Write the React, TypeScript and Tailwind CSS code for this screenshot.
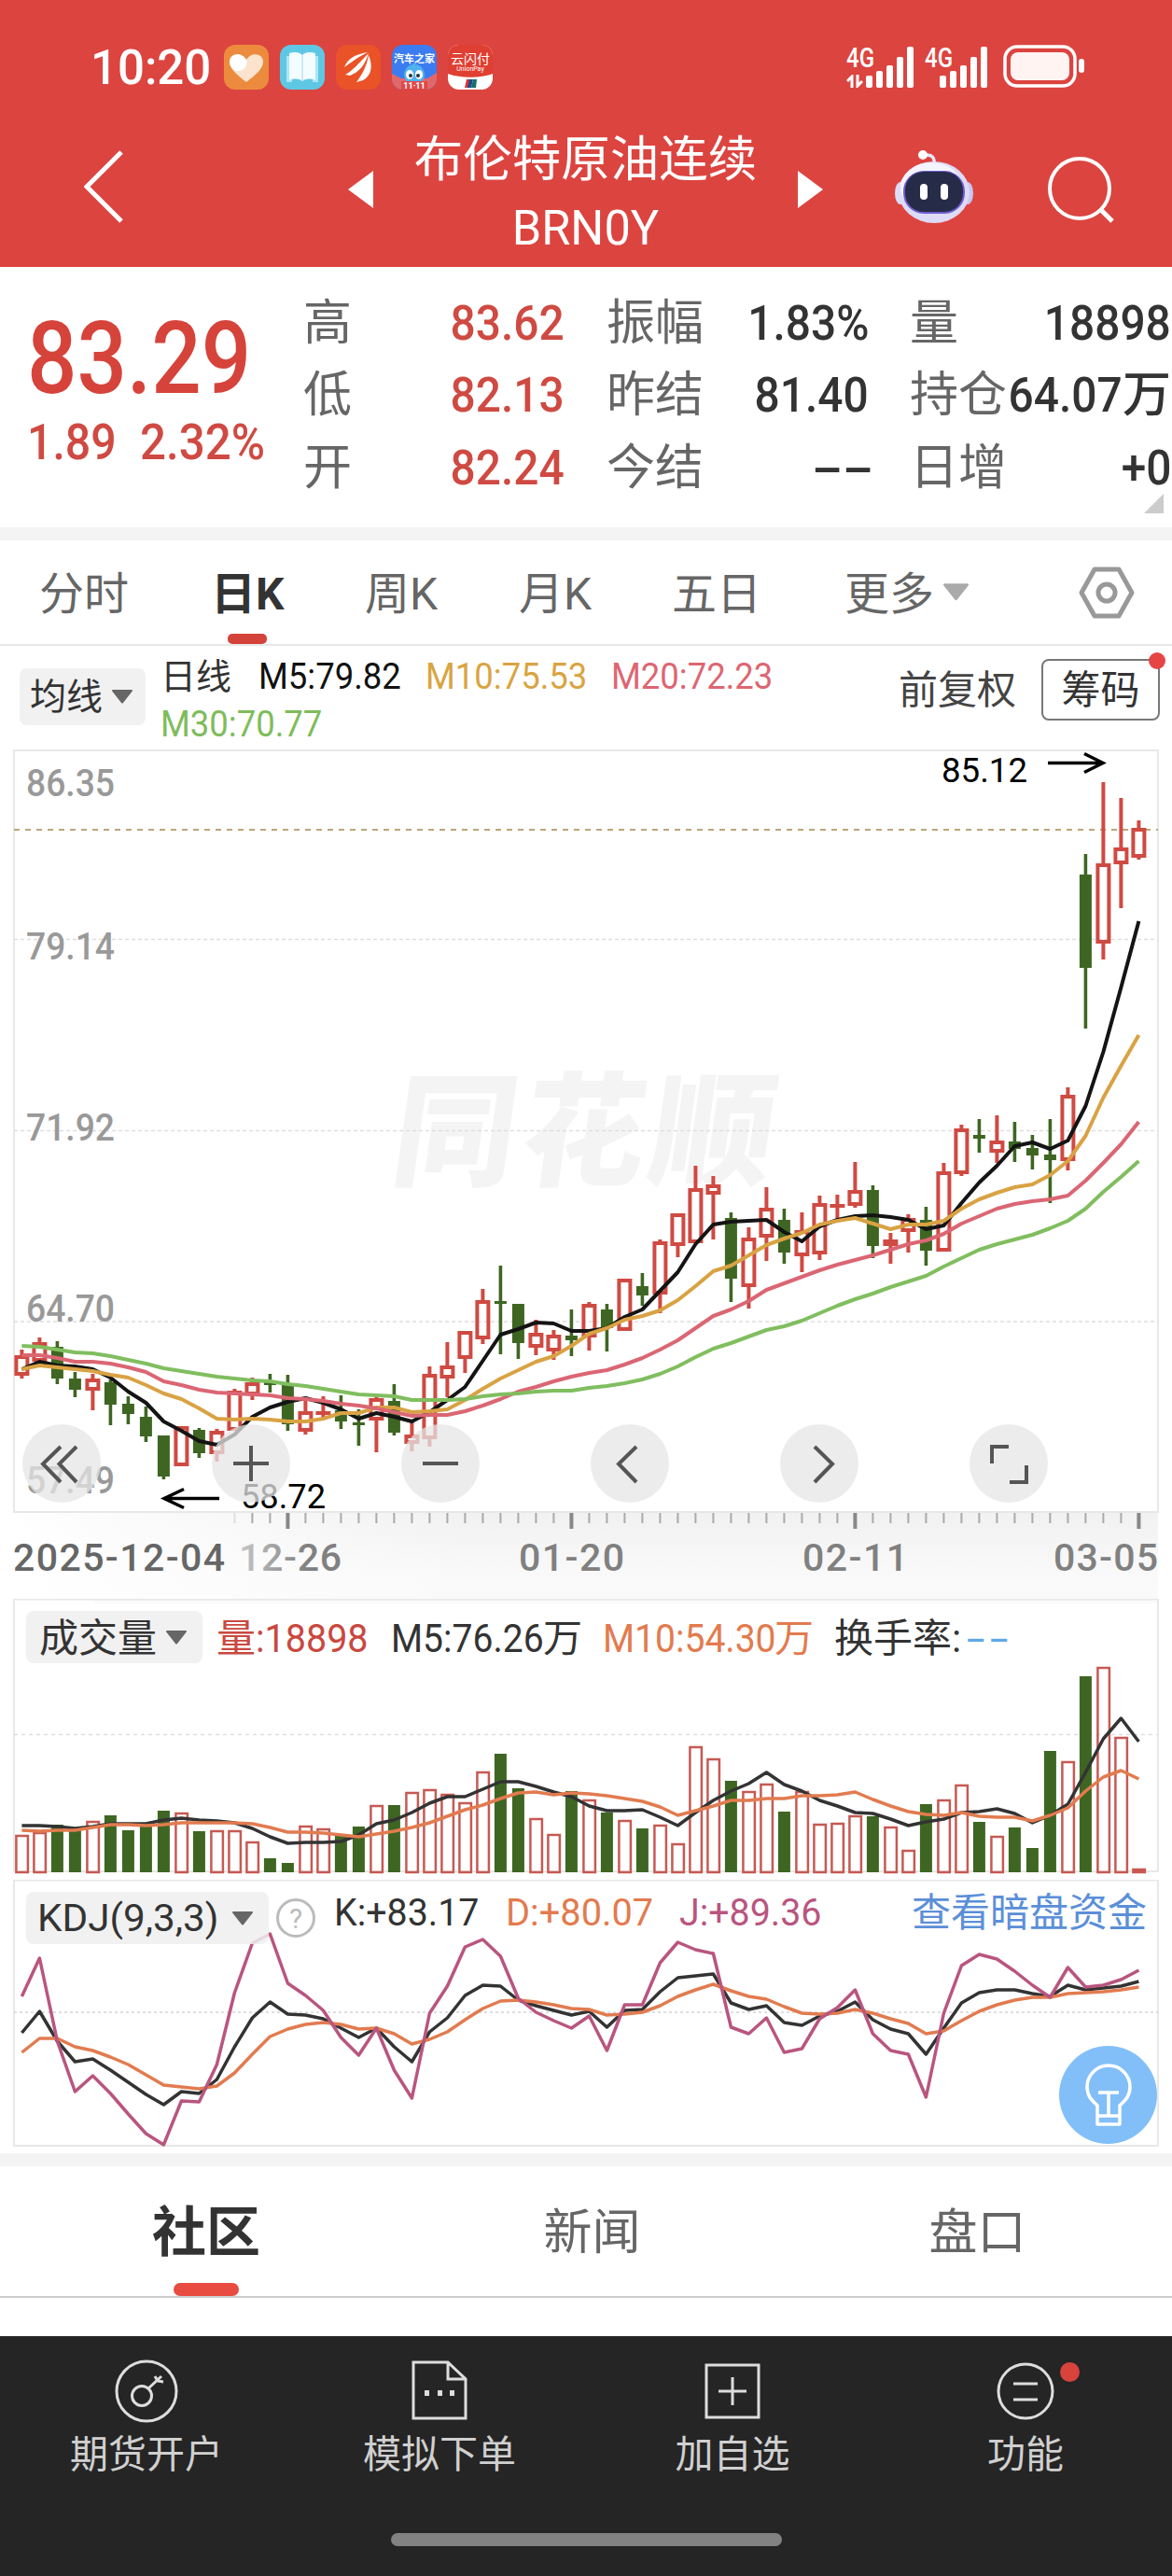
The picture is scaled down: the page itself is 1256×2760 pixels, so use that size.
import React from "react";

// x of the n-th trading day, shared by the three charts
const dayX = (i: number) => 23.4 + i * 19;

// [up?, high, body top, body bottom, low]
const candles: number[][] = [
  [1, 1446, 1452, 1474, 1477], [1, 1433, 1438, 1459, 1459], [0, 1437, 1443, 1477, 1483], [0, 1470, 1477, 1489, 1497],
  [1, 1472, 1477, 1490, 1511], [0, 1478, 1481, 1505, 1527], [0, 1496, 1504, 1515, 1526], [0, 1507, 1518, 1539, 1545],
  [0, 1538, 1538, 1582, 1585], [1, 1528, 1528, 1571, 1571], [0, 1530, 1532, 1557, 1562], [1, 1531, 1533, 1558, 1566],
  [1, 1488, 1490, 1533, 1533], [1, 1476, 1481, 1495, 1500], [0, 1472, 1479, 1484, 1492], [0, 1473, 1484, 1526, 1533],
  [1, 1498, 1512, 1534, 1537], [1, 1496, 1512, 1516, 1519], [0, 1495, 1511, 1523, 1531], [0, 1510, 1524, 1527, 1549],
  [1, 1496, 1498, 1522, 1556], [0, 1483, 1501, 1535, 1538], [1, 1522, 1537, 1547, 1555], [1, 1464, 1472, 1542, 1550],
  [1, 1438, 1463, 1477, 1497], [1, 1426, 1426, 1456, 1471], [1, 1381, 1393, 1435, 1440], [0, 1356, 1394, 1397, 1451],
  [0, 1397, 1397, 1439, 1456], [1, 1414, 1428, 1444, 1452], [1, 1425, 1430, 1448, 1457], [0, 1403, 1431, 1436, 1453],
  [1, 1395, 1397, 1433, 1447], [0, 1397, 1403, 1423, 1448], [1, 1370, 1370, 1426, 1426], [0, 1364, 1378, 1388, 1399],
  [1, 1328, 1330, 1387, 1407], [1, 1300, 1300, 1335, 1347], [1, 1249, 1273, 1332, 1332], [1, 1260, 1269, 1280, 1328],
  [0, 1299, 1305, 1370, 1395], [1, 1315, 1326, 1379, 1402], [1, 1272, 1294, 1326, 1351], [0, 1295, 1307, 1342, 1354],
  [1, 1299, 1318, 1346, 1363], [1, 1281, 1289, 1344, 1350], [1, 1280, 1290, 1294, 1307], [1, 1245, 1275, 1292, 1294],
  [0, 1270, 1275, 1335, 1348], [1, 1321, 1328, 1335, 1354], [1, 1301, 1305, 1320, 1342], [0, 1293, 1307, 1340, 1356],
  [1, 1246, 1255, 1341, 1341], [1, 1205, 1209, 1258, 1260], [0, 1199, 1216, 1220, 1235], [1, 1195, 1222, 1235, 1246],
  [0, 1202, 1223, 1231, 1245], [0, 1216, 1230, 1238, 1253], [0, 1199, 1237, 1243, 1289], [1, 1165, 1173, 1244, 1254],
  [0, 915, 937, 1037, 1102], [1, 838, 925, 1011, 1028], [1, 855, 908, 926, 973], [1, 879, 887, 919, 921],
];

const ma5 = [
  1467, 1459, 1463, 1464, 1467, 1476, 1491, 1503, 1523, 1533, 1544, 1548, 1537, 1518, 1508, 1502, 1498, 1503, 1510, 1520, 1514,
  1518, 1523, 1513, 1500, 1486, 1458, 1430, 1424, 1417, 1418, 1426, 1426, 1423, 1411, 1403, 1383, 1363, 1333, 1312, 1309, 1308,
  1307, 1320, 1330, 1314, 1307, 1303, 1302, 1304, 1307, 1317, 1313, 1289, 1267, 1249, 1228, 1224, 1231, 1222, 1185, 1127, 1058, 987,
];
const ma10 = [
  1467, 1463, 1465, 1467, 1469, 1473, 1476, 1484, 1493, 1499, 1509, 1520, 1521, 1520, 1521, 1523, 1523, 1520, 1514, 1514, 1508,
  1508, 1513, 1512, 1510, 1500, 1488, 1477, 1468, 1459, 1453, 1442, 1429, 1423, 1414, 1410, 1404, 1393, 1378, 1362, 1356, 1345,
  1334, 1327, 1321, 1312, 1308, 1305, 1311, 1317, 1312, 1312, 1308, 1295, 1285, 1278, 1272, 1269, 1259, 1244, 1217, 1176, 1142, 1109,
];
const ma20 = [
  1452, 1452, 1455, 1459, 1459, 1461, 1465, 1470, 1480, 1484, 1489, 1492, 1493, 1494, 1495, 1498, 1499, 1501, 1504, 1506, 1509,
  1513, 1517, 1516, 1516, 1512, 1506, 1499, 1491, 1486, 1480, 1475, 1471, 1468, 1462, 1455, 1446, 1436, 1423, 1410, 1403, 1394,
  1382, 1375, 1368, 1361, 1355, 1350, 1345, 1339, 1333, 1329, 1322, 1311, 1303, 1295, 1290, 1287, 1285, 1281, 1265, 1246, 1226, 1202,
];
const ma30 = [
  1442, 1443, 1446, 1449, 1450, 1453, 1457, 1461, 1466, 1469, 1472, 1475, 1477, 1479, 1480, 1483, 1485, 1488, 1491, 1494, 1495,
  1496, 1500, 1500, 1500, 1499, 1496, 1494, 1493, 1491, 1490, 1490, 1487, 1485, 1482, 1478, 1472, 1464, 1454, 1445, 1439, 1432,
  1425, 1421, 1415, 1407, 1399, 1392, 1386, 1379, 1373, 1367, 1357, 1348, 1339, 1333, 1328, 1323, 1316, 1308, 1295, 1277, 1261, 1244,
];

const volumes = [
  1966, 1963, 1955, 1960, 1951, 1945, 1961, 1955, 1940, 1942, 1962, 1961, 1961, 1973, 1991, 1996, 1956, 1959, 1967, 1957, 1934,
  1934, 1920, 1917, 1922, 1931, 1898, 1879, 1916, 1948, 1965, 1919, 1928, 1942, 1950, 1959, 1955, 1975, 1871, 1884, 1908, 1919,
  1911, 1941, 1919, 1954, 1953, 1945, 1946, 1957, 1982, 1933, 1928, 1912, 1952, 1967, 1958, 1980, 1876, 1887, 1796, 1786, 1861, 2002,
];
const vol5 = [
  1956, 1956, 1957, 1959, 1957, 1954, 1954, 1954, 1950, 1948, 1950, 1951, 1953, 1959, 1968, 1975, 1974, 1974, 1973, 1966, 1954,
  1950, 1942, 1932, 1925, 1925, 1917, 1909, 1909, 1914, 1920, 1925, 1935, 1940, 1940, 1939, 1947, 1956, 1942, 1929, 1919, 1911,
  1899, 1912, 1919, 1929, 1935, 1942, 1943, 1949, 1956, 1952, 1949, 1942, 1941, 1938, 1943, 1953, 1945, 1933, 1899, 1863, 1841, 1866,
];
const vol10 = [
  1961, 1962, 1961, 1961, 1958, 1955, 1955, 1956, 1955, 1953, 1953, 1953, 1953, 1954, 1958, 1963, 1963, 1964, 1966, 1968, 1965,
  1962, 1958, 1953, 1946, 1939, 1934, 1927, 1921, 1920, 1923, 1921, 1922, 1924, 1927, 1930, 1936, 1945, 1940, 1935, 1929, 1929,
  1927, 1927, 1924, 1924, 1923, 1920, 1928, 1935, 1941, 1944, 1945, 1942, 1946, 1947, 1947, 1951, 1945, 1937, 1919, 1904, 1897, 1906,
];

const kLine = [
  2178, 2155, 2187, 2209, 2206, 2218, 2231, 2244, 2255, 2241, 2243, 2228, 2193, 2162, 2145, 2158, 2159, 2163, 2173, 2183, 2173,
  2193, 2209, 2177, 2162, 2138, 2127, 2128, 2143, 2149, 2154, 2159, 2155, 2172, 2154, 2153, 2134, 2119, 2117, 2115, 2146, 2153,
  2149, 2167, 2170, 2160, 2155, 2145, 2164, 2174, 2179, 2201, 2173, 2146, 2135, 2132, 2132, 2136, 2139, 2127, 2132, 2130, 2128, 2123,
];
const dLine = [
  2199, 2184, 2184, 2193, 2197, 2204, 2212, 2223, 2234, 2236, 2238, 2235, 2221, 2201, 2182, 2174, 2169, 2167, 2169, 2174, 2173,
  2179, 2190, 2185, 2177, 2164, 2152, 2144, 2143, 2145, 2148, 2152, 2153, 2159, 2158, 2156, 2149, 2139, 2132, 2126, 2133, 2139,
  2142, 2150, 2157, 2158, 2157, 2153, 2157, 2163, 2168, 2179, 2176, 2165, 2155, 2148, 2143, 2140, 2140, 2136, 2135, 2134, 2132, 2129,
];
const jLine = [
  2139, 2098, 2187, 2241, 2224, 2243, 2265, 2286, 2298, 2251, 2252, 2212, 2135, 2082, 2072, 2125, 2138, 2154, 2183, 2202, 2173,
  2218, 2248, 2157, 2128, 2086, 2078, 2096, 2141, 2156, 2165, 2173, 2160, 2197, 2148, 2148, 2103, 2081, 2089, 2093, 2172, 2179,
  2162, 2199, 2195, 2163, 2151, 2132, 2179, 2197, 2201, 2247, 2157, 2106, 2094, 2099, 2112, 2127, 2140, 2108, 2129, 2127, 2121, 2111,
];

const UP = "#cf4a42";
const DOWN = "#3e6622";

const Curve = ({ ys, color, width = 4 }: { ys: number[]; color: string; width?: number }) => (
  <polyline
    points={ys.map((y, i) => `${dayX(i)},${y}`).join(" ")}
    fill="none"
    stroke={color}
    strokeWidth={width}
    strokeLinejoin="round"
  />
);

const ChartText = ({
  x, y, w, size = 41, color = "#999", weight = 500, spread, children,
}: {
  x: number; y: number; w: number; size?: number; color?: string; weight?: number; spread?: boolean; children: string;
}) => (
  <text
    x={x}
    y={y}
    fontSize={size}
    fontWeight={weight}
    fill={color}
    textLength={w}
    lengthAdjust={spread ? "spacing" : "spacingAndGlyphs"}
  >
    {children}
  </text>
);

const Caret = ({ className }: { className: string }) => (
  <svg viewBox="0 0 22 15" className={className} fill="currentColor">
    <path d="M1 0h20a1 1 0 0 1 .8 1.600L12 14a1.300 1.300 0 0 1-2 0L.2 1.600A1 1 0 0 1 1 0z" />
  </svg>
);

const Signal = () => (
  <svg viewBox="0 0 51 44" className="w-[51px] h-[44px]" fill="#fff">
    <rect x="0" y="31" width="7" height="13" rx="2" />
    <rect x="11" y="26" width="7" height="18" rx="2" />
    <rect x="22" y="20" width="7" height="24" rx="2" />
    <rect x="33" y="11" width="7" height="33" rx="2" />
    <rect x="44" y="0" width="7" height="44" rx="2" />
  </svg>
);

const StatusBar = () => (
  <div className="h-[143px] flex items-center text-white">
    <div className="w-[240px] pl-[97px] pt-[2px] shrink-0">
      <span className="inline-block origin-left scale-x-[0.98] text-[52px] leading-none font-medium">10:20</span>
    </div>
    <div className="flex gap-3">
      <svg viewBox="0 0 48 48" className="size-12">
        <rect width="48" height="48" rx="12" fill="#ec8b3d" />
        <path d="M24 40C15 33 6 26 6 18c0-9 13-11 18-2 5-9 18-7 18 2 0 8-9 15-18 22z" fill="#fbe3cd" />
        <path d="M24 16C19 7 6 9 6 18c0 5 3 8 7 10 7 1 13-4 11-12z" fill="#fff" />
      </svg>
      <svg viewBox="0 0 48 48" className="size-12">
        <rect width="48" height="48" rx="12" fill="#5ec8e4" />
        <path d="M7 12h6v28H7zM35 12h6v28h-6z" fill="#a9e6f5" />
        <path d="M10 9c6-2 11-1 14 2v28c-4-3-9-3-14-1zM38 9c-6-2-11-1-14 2v28c4-3 9-3 14-1z" fill="#f3fcff" />
        <path d="M24 11v28" stroke="#bfe6f0" strokeWidth="1.5" />
      </svg>
      <svg viewBox="0 0 48 48" className="size-12">
        <rect width="48" height="48" rx="12" fill="#ea5327" />
        <path d="M9 24C13 14 22 10 34 8 22 14 18 18 9 24zM10 32c8-4 14-12 25-23-4 13-10 20-20 24zM22 40c6-8 11-17 13-29 5 12 3 22-6 27z" fill="#fff" />
      </svg>
      <svg viewBox="0 0 48 48" className="size-12 rounded-[12px]">
        <rect width="48" height="48" fill="#3b7cf0" />
        <path d="M0 31l10 5 28 0 10-6v18H0z" fill="#e0686a" />
        <circle cx="24" cy="32" r="11" fill="#4fb2ee" />
        <path d="M24 19l4 5h-8z" fill="#4fb2ee" />
        <ellipse cx="19" cy="32" rx="4" ry="5" fill="#fff" />
        <ellipse cx="29" cy="32" rx="4" ry="5" fill="#fff" />
        <circle cx="20" cy="33" r="2" fill="#234" />
        <circle cx="28" cy="33" r="2" fill="#234" />
        <rect x="10" y="39" width="28" height="9" fill="#e04848" />
        <text x="24" y="19" fontSize="11" fontWeight="700" textAnchor="middle" fill="#fff">汽车之家</text>
        <text x="24" y="47" fontSize="9" fontWeight="700" textAnchor="middle" fill="#fff">11·11</text>
      </svg>
      <svg viewBox="0 0 48 48" className="size-12 rounded-[12px]">
        <rect width="48" height="48" fill="#fff" />
        <path d="M0 0h48v31c-14 5-34 5-48 0z" fill="#df3f32" />
        <text x="24" y="20" fontSize="14" textAnchor="middle" fill="#fff">云闪付</text>
        <text x="24" y="28" fontSize="7" textAnchor="middle" fill="#fff">UnionPay</text>
        <path d="M20 37h4l-2 9h-4z" fill="#d33" />
        <path d="M23 37h4l-2 9h-4z" fill="#1b4b8a" />
        <path d="M27 37h4l-1 9h-5z" fill="#12706c" />
      </svg>
    </div>
    <div className="ml-auto mr-[93px] flex items-end h-[44px]">
      <div className="w-[21px] h-[44px] flex flex-col justify-between">
        <span className="inline-block origin-left scale-x-[0.8] text-[30px] leading-[24px] font-medium">4G</span>
        <svg viewBox="0 0 18 14" className="w-[18px] h-[14px]" fill="none" stroke="#fff" strokeWidth="3">
          <path d="M6 14V2L1 7M12 0v12l5-5" />
        </svg>
      </div>
      <Signal />
      <div className="ml-3 w-[16px] h-[44px]">
        <span className="inline-block origin-left scale-x-[0.8] text-[30px] leading-[24px] font-medium">4G</span>
      </div>
      <Signal />
      <svg viewBox="0 0 88 46" className="ml-[17px] w-[88px] h-[46px]">
        <rect x="2" y="2" width="75" height="42" rx="13" fill="none" stroke="#fff" strokeWidth="3.5" />
        <rect x="8" y="8" width="63" height="30" rx="8" fill="#fff4f2" />
        <rect x="81" y="15" width="6" height="15" rx="3" fill="#fff" />
      </svg>
    </div>
  </div>
);

const Robot = () => (
  <svg viewBox="0 0 84 78" className="w-[84px] h-[78px]">
    <path d="M42 16c1-8-2-11-8-11" fill="none" stroke="#e8e6fa" strokeWidth="3.5" />
    <circle cx="30" cy="5" r="5" fill="#fff" />
    <ellipse cx="6" cy="46" rx="6" ry="12" fill="#dcdcf6" />
    <ellipse cx="78" cy="46" rx="6" ry="12" fill="#c9c6f2" />
    <ellipse cx="42" cy="45" rx="38" ry="33" fill="#dddbf6" />
    <ellipse cx="39" cy="40" rx="33" ry="27" fill="#f4f4ff" />
    <rect x="9" y="22" width="66" height="46" rx="22" fill="#6f5ccf" />
    <rect x="11" y="23" width="62" height="43" rx="20" fill="#262c48" />
    <rect x="27" y="36" width="8" height="17" rx="4" fill="#fff" />
    <rect x="49" y="36" width="8" height="17" rx="4" fill="#fff" />
  </svg>
);

const TitleBar = () => (
  <div className="h-[143px] flex text-white">
    <svg viewBox="0 0 42 78" className="ml-[90px] mt-[18px] w-[42px] h-[78px]" fill="none" stroke="#fff" strokeWidth="5">
      <path d="M40 2L3 39l37 37" />
    </svg>
    <svg viewBox="0 0 27 40" className="ml-[241px] mt-[40px] w-[27px] h-[40px]" fill="#fff">
      <path d="M27 0v40L0 20z" />
    </svg>
    <div className="w-[455px] flex flex-col items-center">
      <div className="h-[58px] mt-[-1px] leading-[58px] text-[52.5px]">布伦特原油连续</div>
      <div className="mt-[14px] leading-[62px] text-[51px]">
        <span className="inline-block scale-x-[0.99]">BRN0Y</span>
      </div>
    </div>
    <svg viewBox="0 0 27 40" className="mt-[40px] w-[27px] h-[40px]" fill="#fff">
      <path d="M0 0v40l27-20z" />
    </svg>
    <div className="ml-[77px] mt-[18px]">
      <Robot />
    </div>
    <svg viewBox="0 0 72 72" className="ml-[79px] mt-[24px] w-[72px] h-[72px]" fill="none" stroke="#fff" strokeWidth="4">
      <circle cx="35" cy="35" r="32" />
      <path d="M58 58l12 12" strokeWidth="5" />
    </svg>
  </div>
);

const Quote = ({ label, value, red }: { label: string; value: React.ReactNode; red?: boolean }) => (
  <div className="h-[77.5px] flex items-center justify-between text-[52px] leading-none">
    <span className="text-[#666] whitespace-nowrap">{label}</span>
    <span className={`font-medium whitespace-nowrap ${red ? "text-[#cf4a42]" : "text-[#333]"}`}>{value}</span>
  </div>
);

const Num = ({ children }: { children: React.ReactNode }) => (
  <span className="inline-block origin-right scale-x-[0.92]">{children}</span>
);

const Dashes = () => (
  <span className="inline-flex gap-[10px]">
    <span className="w-[23px] flex justify-center"><span className="inline-block scale-x-[1.9]">-</span></span>
    <span className="w-[23px] flex justify-center"><span className="inline-block scale-x-[1.9]">-</span></span>
  </span>
);

const QuotePanel = () => (
  <div className="relative h-[279px] flex bg-white">
    <div className="w-[325px] pl-[29px] pt-[45px] text-[#d6433b]">
      <div className="h-[108px] leading-[108px] text-[107px] font-medium">
        <span className="inline-block origin-left scale-x-[0.88]">83.29</span>
      </div>
      <div className="mt-[5px] flex h-[60px] leading-[60px] text-[53px] font-medium text-[#cf4a42]">
        <div className="w-[121px]"><span className="inline-block origin-left scale-x-[0.91]">1.89</span></div>
        <div><span className="inline-block origin-left scale-x-[0.93]">2.32%</span></div>
      </div>
    </div>
    <div className="pt-[22px] w-[280px]">
      <Quote label="高" red value={<Num>83.62</Num>} />
      <Quote label="低" red value={<Num>82.13</Num>} />
      <Quote label="开" red value={<Num>82.24</Num>} />
    </div>
    <div className="ml-[45px] pt-[22px] w-[281px]">
      <Quote label="振幅" value={<Num>1.83%</Num>} />
      <Quote label="昨结" value={<Num>81.40</Num>} />
      <Quote label="今结" value={<Dashes />} />
    </div>
    <div className="ml-[44px] pt-[22px] w-[280px]">
      <Quote label="量" value={<Num>18898</Num>} />
      <Quote label="持仓" value={<><span className="-ml-4"><Num>64.07</Num></span>万</>} />
      <Quote label="日增" value={<Num>+0</Num>} />
    </div>
    <svg viewBox="0 0 21 21" className="absolute right-[9px] bottom-[15px] size-[21px]" fill="#ccc">
      <path d="M21 0v21H0z" />
    </svg>
  </div>
);

const PeriodTabs = () => (
  <div className="relative h-[113px] flex items-center border-b-2 border-[#e8e8e8] text-[48px] leading-none text-[#666] whitespace-nowrap">
    <span className="w-[185px] pl-[42px] mt-[4px]">分时</span>
    <span className="w-[163px] pl-[41px] mt-[4px] font-bold text-[#333]">日K</span>
    <span className="w-[164px] pl-[43px] mt-[4px]">周K</span>
    <span className="w-[165px] pl-[44px] mt-[4px]">月K</span>
    <span className="w-[185px] pl-[43px] mt-[4px]">五日</span>
    <span className="pl-[43px] mt-[4px]">更多</span>
    <Caret className="ml-[10px] w-[27px] h-[21px] text-[#aaa]" />
    <svg viewBox="0 0 60 56" className="ml-[118px] w-[60px] h-[56px]" fill="none" stroke="#999" strokeWidth="5">
      <path d="M17 3h26l14 25-14 25H17L3 28z" strokeLinejoin="round" />
      <circle cx="30" cy="28" r="9" />
    </svg>
    <div className="absolute left-[244px] bottom-0 w-[42px] h-[11px] rounded-[5px] bg-[#d4433a]" />
  </div>
);

const MaLegend = () => (
  <div className="h-[111px] flex text-[38px]">
    <div className="ml-[21px] mt-[24px] w-[135px] h-[61px] rounded-lg bg-[#f1f1f1] flex items-center pl-[11px] text-[#333] text-[39px] leading-none">
      <span className="mt-[2px]">均线</span>
      <Caret className="ml-[10px] w-[22px] h-[15px] text-[#666]" />
    </div>
    <div className="ml-[16px] mt-[9px] w-[700px] flex flex-wrap leading-[48px] whitespace-nowrap">
      <span className="w-[105px] text-[#333]">日线</span>
      <span className="w-[179px] text-[#111]"><span className="inline-block origin-left scale-x-[0.96]">M5:79.82</span></span>
      <span className="w-[199px] text-[#d9a441]"><span className="inline-block origin-left scale-x-[0.96]">M10:75.53</span></span>
      <span className="w-[199px] text-[#dd6672]"><span className="inline-block origin-left scale-x-[0.96]">M20:72.23</span></span>
      <span className="w-[199px] text-[#7fbc5b]"><span className="inline-block origin-left scale-x-[0.96]">M30:70.77</span></span>
    </div>
    <div className="ml-auto mt-[15px] leading-[65px] text-[42px] text-[#444]">前复权</div>
    <div className="relative ml-[27px] mr-[13px] mt-[14px] w-[127px] h-[66px] border-2 border-[#777] rounded-lg text-center text-[42px] leading-[64px] text-[#333]">
      筹码
      <span className="absolute -right-[8px] -top-[9px] size-[18px] rounded-full bg-[#e64545]" />
    </div>
  </div>
);

const toolIcons = [
  "M41 24L22 42.500l19 19.500M58 24L39.500 42.500l18.500 19.500",
  "M42 23v38M23 42h38",
  "M23 42h38",
  "M49 24L30 42.500l19 19.500",
  "M37 24l19 18.500-19 19.500",
  "M42 24H24v18M61 44v18H43",
];

const PriceChart = () => (
  <div className="relative h-[910px]">
    <svg viewBox="0 803 1256 910" className="block w-[1256px] h-[910px]">
      <defs>
        <linearGradient id="axisBg" x1="0" x2="0" y1="0" y2="1">
          <stop offset="0" stopColor="#f1f1f1" />
          <stop offset="0.7" stopColor="#f9f9f9" />
          <stop offset="1" stopColor="#fafafa" />
        </linearGradient>
        <linearGradient id="fadeLeft">
          <stop offset="0" stopColor="#fff" />
          <stop offset="0.25" stopColor="#fff" stopOpacity="0.7" />
          <stop offset="1" stopColor="#fff" stopOpacity="0" />
        </linearGradient>
        <linearGradient id="dateFade" gradientUnits="userSpaceOnUse" x1="250" x2="330" y1="0" y2="0">
          <stop offset="0" stopColor="#ccc" />
          <stop offset="1" stopColor="#808080" />
        </linearGradient>
      </defs>
      <rect x="15" y="1620" width="1226" height="93" fill="url(#axisBg)" />
      <rect x="15" y="1620" width="500" height="93" fill="url(#fadeLeft)" />

      <text transform="translate(416 1260) skewX(-8)" fontSize="132" fontWeight="900" fill="#f4f4f4" textLength="408">同花顺</text>

      <rect x="15" y="804" width="1226" height="816" fill="none" stroke="#e8e8e8" strokeWidth="2" />
      {[1006.5, 1211.5, 1416].map((y) => (
        <path key={y} d={`M15 ${y}H1241`} stroke="#dedede" strokeWidth="1.5" strokeDasharray="4 3" />
      ))}
      <path d="M15 889H1241" stroke="#bca57a" strokeWidth="2" strokeDasharray="6 6" />

      <ChartText x={28} y={853} w={95}>86.35</ChartText>
      <ChartText x={28} y={1028} w={95}>79.14</ChartText>
      <ChartText x={28} y={1222} w={95}>71.92</ChartText>
      <ChartText x={28} y={1416} w={95}>64.70</ChartText>
      <ChartText x={28} y={1600} w={95}>57.49</ChartText>

      {candles.map(([up, high, top, bottom, low], i) => {
        const x = dayX(i);
        return up ? (
          <g key={i} stroke={UP} strokeWidth="4" fill="none">
            <path d={`M${x} ${high}V${top}M${x} ${bottom}V${low}`} />
            {bottom - top > 8 ? (
              <rect x={x - 6} y={top + 2} width="12" height={bottom - top - 4} />
            ) : (
              <rect x={x - 8} y={top} width="16" height={bottom - top} fill={UP} stroke="none" />
            )}
          </g>
        ) : (
          <g key={i} fill={DOWN}>
            <rect x={x - 1.8} y={high} width="3.6" height={low - high} />
            <rect x={x - 6.5} y={top} width="13" height={bottom - top} />
          </g>
        );
      })}
      <Curve ys={ma5} color="#141414" />
      <Curve ys={ma10} color="#d9a243" />
      <Curve ys={ma20} color="#db6673" />
      <Curve ys={ma30} color="#80be5f" />

      <ChartText x={1009} y={838} w={92} size={36} color="#000" weight={400}>85.12</ChartText>
      <path d="M1123 817.500H1181M1162 807.500L1182 817.500l-20 10" fill="none" stroke="#000" strokeWidth="3.5" />
      <ChartText x={258} y={1616} w={91} size={36} color="#000" weight={400}>58.72</ChartText>
      <path d="M235 1605.500H177M197 1595.500L176 1605.500l21 10" fill="none" stroke="#000" strokeWidth="3.5" />

      {candles.map((_, i) =>
        i < 12 ? null : (i + 1) % 16 === 0 ? (
          <rect key={i} x={dayX(i) - 2} y="1621" width="4" height="17" fill="#888" />
        ) : (
          <rect key={i} x={dayX(i) - 1} y="1621" width="2" height="11" fill={i === 12 ? "#ddd" : "#aaa"} />
        )
      )}
      <ChartText x={14} y={1683} w={227} color="#666" spread>2025-12-04</ChartText>
      <ChartText x={256} y={1683} w={110} color="url(#dateFade)" spread>12-26</ChartText>
      <ChartText x={556} y={1683} w={113} color="#808080" spread>01-20</ChartText>
      <ChartText x={860} y={1683} w={113} color="#808080" spread>02-11</ChartText>
      <ChartText x={1129} y={1683} w={112} color="#808080" spread>03-05</ChartText>
    </svg>
    <div className="absolute left-[24px] top-[723px] flex gap-[119px]">
      {toolIcons.map((d) => (
        <button key={d} className="size-[84px] rounded-full bg-[#e5e5e5]/75">
          <svg viewBox="0 0 84 84" className="size-[84px]" fill="none" stroke="#555" strokeWidth="4">
            <path d={d} />
          </svg>
        </button>
      ))}
    </div>
  </div>
);

const VolumeChart = () => (
  <div className="relative h-[301px]">
    <svg viewBox="0 1713 1256 301" className="block w-[1256px] h-[301px]">
      <rect x="100" y="1713" width="1141" height="5" fill="#fafafa" />
      <path d="M15 2005V1713.500H1241V2005z" fill="none" stroke="#e8e8e8" strokeWidth="2" />
      <path d="M15 1858.500H1241" stroke="#dedede" strokeWidth="1.5" strokeDasharray="4 4" />
      {volumes.map((y, i) =>
        candles[i][0] ? (
          <rect key={i} x={dayX(i) - 6} y={y + 1} width="12.5" height={Math.max(2005 - y, 2)} fill={y > 2000 ? UP : "none"} stroke="#c65a53" strokeWidth="2.5" />
        ) : (
          <rect key={i} x={dayX(i) - 6.5} y={y} width="13" height={2006 - y} fill={DOWN} />
        )
      )}
      <Curve ys={vol5} color="#333" width={3.5} />
      <Curve ys={vol10} color="#e27b4f" width={3.5} />
    </svg>
    <div className="absolute left-[28px] top-[13px] h-[56px] flex items-center text-[42px] leading-none whitespace-nowrap">
      <div className="w-[189px] h-[56px] rounded-lg bg-[#f1f1f1] flex items-center pl-[14px] text-[#333]">
        <span className="mt-[3px]">成交量</span>
        <Caret className="ml-[10px] w-[22px] h-[15px] text-[#666]" />
      </div>
      <span className="mt-[3px] ml-[15px] w-[187px] text-[#c9483f]">
        量<span className="inline-block origin-left scale-x-[0.94]">:18898</span>
      </span>
      <span className="mt-[3px] w-[227px] flex text-[#333]">
        <span className="w-[163px]"><span className="inline-block origin-left scale-x-[0.93]">M5:76.26</span></span>万
      </span>
      <span className="mt-[3px] w-[248px] flex text-[#e27b4f]">
        <span className="w-[184px]"><span className="inline-block origin-left scale-x-[0.93]">M10:54.30</span></span>万
      </span>
      <span className="mt-[3px] text-[#333]">换手率:</span>
      <span className="mt-[3px] ml-[6px] flex gap-[6px] text-[#5fa8e8]">
        <span className="w-[19px] flex justify-center"><span className="inline-block scale-x-[1.7]">-</span></span>
        <span className="w-[19px] flex justify-center"><span className="inline-block scale-x-[1.7]">-</span></span>
      </span>
    </div>
  </div>
);

const KdjChart = () => (
  <div className="relative h-[293px]">
    <svg viewBox="0 2014 1256 293" className="block w-[1256px] h-[293px]">
      <rect x="15" y="2014.5" width="1226" height="284.5" fill="none" stroke="#e8e8e8" strokeWidth="2" />
      <path d="M15 2156H1241" stroke="#d4d4d4" strokeWidth="1.5" strokeDasharray="3 3" />
      <Curve ys={kLine} color="#333" width={3.5} />
      <Curve ys={dLine} color="#e27b4f" width={3.5} />
      <Curve ys={jLine} color="#b9557f" width={3.5} />
    </svg>
    <div className="absolute left-[28px] right-[27px] top-[13px] flex text-[41px] leading-[45px] whitespace-nowrap">
      <div className="w-[260px] h-[56px] rounded-lg bg-[#eee]/85 flex items-center pl-[12px] pt-px text-[#333]">
        <span className="w-[199px]"><span className="inline-block origin-left scale-x-[1.03]">KDJ(9,3,3)</span></span>
        <Caret className="ml-[10px] w-[22px] h-[15px] text-[#666]" />
      </div>
      <div className="ml-[8px] mt-[7px] size-[42px] rounded-full border-3 border-[#bbb] text-center text-[30px] leading-[37px] text-[#bbb]">?</div>
      <span className="ml-[20px] w-[184px] text-[#333]"><span className="inline-block origin-left scale-x-[0.96]">K:+83.17</span></span>
      <span className="w-[186px] text-[#e27b4f]"><span className="inline-block origin-left scale-x-[0.97]">D:+80.07</span></span>
      <span className="text-[#b9557f]"><span className="inline-block origin-left scale-x-[0.96]">J:+89.36</span></span>
      <span className="ml-auto text-[42px] text-[#5b8fd8]">查看暗盘资金</span>
    </div>
    <svg viewBox="0 0 105 105" className="absolute left-[1135px] top-[178px] size-[105px]">
      <circle cx="52.5" cy="52.5" r="52.5" fill="#82bff8" />
      <g fill="none" stroke="#fff" strokeWidth="3.5" strokeLinejoin="round">
        <path d="M41 76V64c-6-6-11-10-11-20a23 23 0 0 1 46 0c0 10-5 14-11 20v20H41zM41 75h24M42 50h22M53 50v25" />
      </g>
    </svg>
  </div>
);

const BottomTabs = () => (
  <div className="relative h-[141px] flex border-b-2 border-[#ccc] text-[52px] leading-[143px] text-[#666]">
    <span className="w-[442px] text-center text-[58px] font-bold text-[#333]">社区</span>
    <span className="w-[385px] text-center">新闻</span>
    <span className="w-[429px] pl-[12px] text-center">盘口</span>
    <div className="absolute left-[186px] bottom-0 w-[70px] h-[14px] rounded-[7px] bg-[#e84b3f]" />
  </div>
);

const NavItem = ({ label, children }: { label: string; children: React.ReactNode }) => (
  <div className="w-[314px] flex flex-col items-center">
    <svg viewBox="0 0 70 70" className="size-[70px]" fill="none" stroke="#ddd" strokeWidth="3">
      {children}
    </svg>
    <span className="mt-[3px] text-[41px] leading-[60px] text-[#d0d0d0]">{label}</span>
  </div>
);

const BottomNav = () => (
  <div className="h-[257px] bg-[#252525] flex flex-col items-center">
    <div className="relative w-[1256px] h-[211px] pt-[24px] flex">
      <NavItem label="期货开户">
        <circle cx="35" cy="35" r="32" />
        <circle cx="30" cy="40" r="10.5" />
        <path d="M37 32L51 19M44 19l3 5 6 1" />
      </NavItem>
      <NavItem label="模拟下单">
        <path d="M7 4h37l19 18v42H7zM44 4v18h19" />
        <path d="M19 37h5M33 37h5M46 37h5" strokeWidth="6" />
      </NavItem>
      <NavItem label="加自选">
        <path d="M7 7h56v56H7zM35 20v30M20 35h30" />
      </NavItem>
      <NavItem label="功能">
        <circle cx="35" cy="35" r="29" />
        <path d="M22 27h26M22 44h26" />
      </NavItem>
      <span className="absolute left-[1136px] top-[28px] size-[21px] rounded-full bg-[#d8433c]" />
    </div>
    <div className="w-[419px] h-[14px] rounded-full bg-[#828282]" />
  </div>
);

const App = () => {
  return (
    <div className="w-[1256px] h-[2760px] overflow-hidden flex flex-col bg-white [font-family:Roboto,'Noto_Sans_CJK_SC',sans-serif] *:shrink-0">
      <div className="bg-[#dc4440]">
        <StatusBar />
        <TitleBar />
      </div>
      <QuotePanel />
      <div className="h-[14px] bg-[#f4f4f4]" />
      <PeriodTabs />
      <MaLegend />
      <PriceChart />
      <VolumeChart />
      <KdjChart />
      <div className="h-[14px] bg-[#f4f4f4]" />
      <BottomTabs />
      <div className="h-[41px]" />
      <BottomNav />
    </div>
  );
};

export default App;
